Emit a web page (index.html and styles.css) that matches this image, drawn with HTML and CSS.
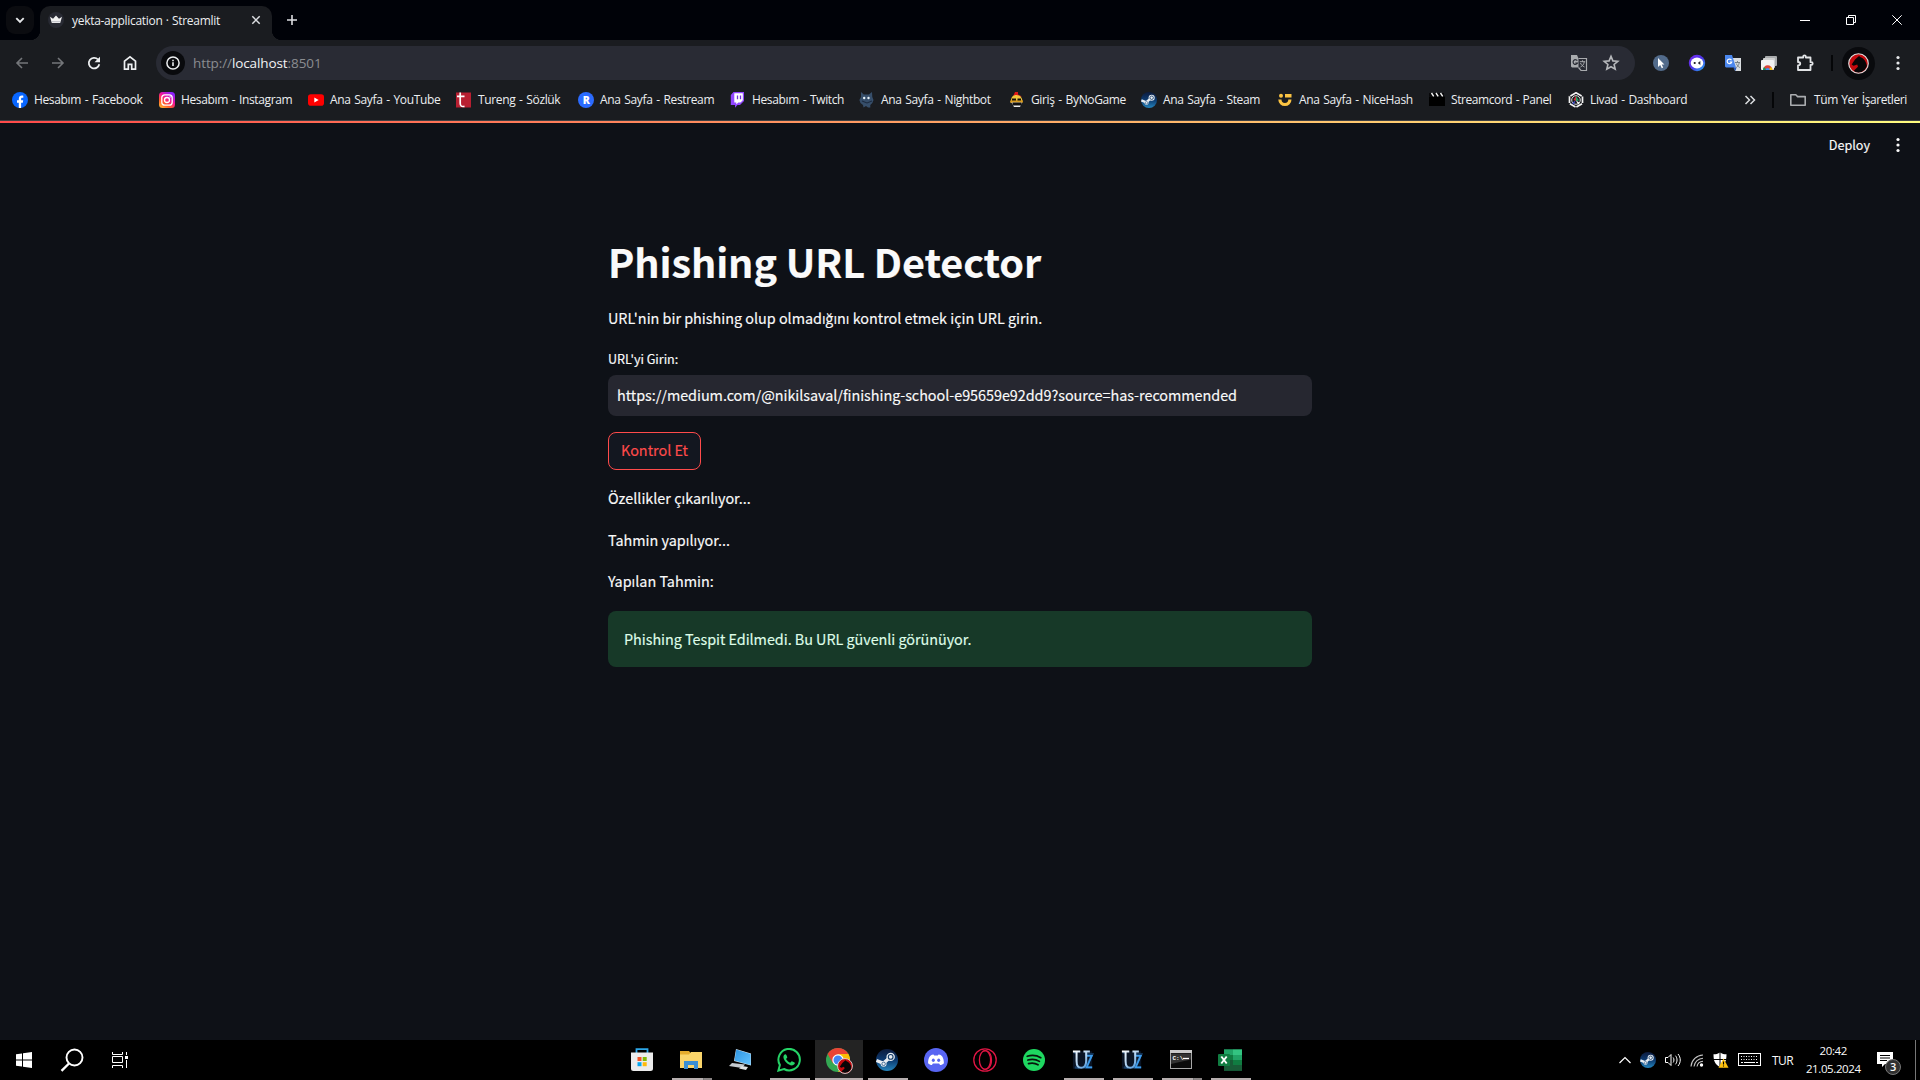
FILE: index.html
```html
<!DOCTYPE html>
<html lang="tr">
<head>
<meta charset="utf-8">
<title>yekta-application · Streamlit</title>
<link rel="stylesheet" href="styles.css">
</head>
<body>
<svg class="defs" width="0" height="0" aria-hidden="true">
  <defs>
    <linearGradient id="steamFill" x1="0" y1="0" x2="0" y2="1"><stop offset="0" stop-color="#0d1b3c"/><stop offset=".5" stop-color="#0c3a70"/><stop offset="1" stop-color="#2585bd"/></linearGradient>
    <linearGradient id="instaFill" x1="0" y1="1" x2=".7" y2="0"><stop offset="0" stop-color="#ffc933"/><stop offset=".35" stop-color="#ff5b2a"/><stop offset=".65" stop-color="#f0139a"/><stop offset="1" stop-color="#8a20ff"/></linearGradient>
    <linearGradient id="ringFill" x1="0" y1="0" x2="1" y2="1"><stop offset="0" stop-color="#7a28f0"/><stop offset=".5" stop-color="#4d35e8"/><stop offset="1" stop-color="#20b8f0"/></linearGradient>
    <linearGradient id="screenFill" x1="0" y1="0" x2="1" y2="1"><stop offset="0" stop-color="#2d93e0"/><stop offset="1" stop-color="#63c4ff"/></linearGradient>
    <linearGradient id="uFill" x1="0" y1="0" x2="1" y2="1"><stop offset="0" stop-color="#ffffff"/><stop offset=".55" stop-color="#a9cdee"/><stop offset="1" stop-color="#2f86d6"/></linearGradient>
    <symbol id="steam" viewBox="0 0 24 24"><circle cx="12" cy="12" r="12" fill="url(#steamFill)"/><path d="M.5 12.500 8 15.600 12 12l4-4" stroke="#e8edf2" stroke-width="3.600" fill="none"/><circle cx="8.300" cy="16.200" r="3.200" fill="#e8edf2"/><circle cx="8.300" cy="16.200" r="1.900" fill="none" stroke="#174a7c" stroke-width=".8"/><circle cx="16" cy="8.600" r="4.600" fill="#e8edf2"/><circle cx="16" cy="8.600" r="2.600" fill="none" stroke="#123a66" stroke-width="1.200"/></symbol>
    <symbol id="avatar" viewBox="0 0 20 20"><circle cx="10" cy="10" r="9.300" fill="#c40a0e"/><path d="M10.500 2.800 12 4c3.500 1.200 5.300 4.500 6 8-1 4-4 6.500-8 6.800-2-.2-3.500-.8-4.500-1.800L9.500 13 8.800 11l-3.500 1.200L3.500 11l3.200-4.800z" fill="#080506"/><circle cx="10" cy="10" r="9.300" fill="none" stroke="#e0dcdc" stroke-width="1.100"/></symbol>
    <symbol id="kebab" viewBox="0 0 6 16"><circle cx="3" cy="2.500" r="1.600"/><circle cx="3" cy="8" r="1.600"/><circle cx="3" cy="13.500" r="1.600"/></symbol>
    <symbol id="uz" viewBox="0 0 24 22"><rect x="1" y="1.500" width="21" height="19" fill="#0a1424"/><path d="M14 5h8l-7 14h7M3 19l5 1M2 3l3 0" stroke="#173d66" stroke-width="2.500" fill="none"/><path d="M15.500 6.500h6l-5.500 12.500h6" stroke="#3d9bea" stroke-width="2" fill="none"/><path d="M1 1.700h8M12.500 1.700h7M5 2v10c0 6 2 7.500 5 7.500 4 0 5.500-3 5.500-8V2" stroke="url(#uFill)" stroke-width="2.200" fill="none"/></symbol>
  </defs>
</svg>

<header class="tabstrip">
  <div class="tab-search"><svg width="12" height="12" viewBox="0 0 12 12"><path d="M2.300 4.200 6 7.900l3.700-3.700" fill="none" stroke="#e6e8ea" stroke-width="1.900"/></svg></div>
  <div class="tab">
    <svg width="16" height="16" viewBox="0 0 16 16"><circle cx="8" cy="8" r="8" fill="#282a33"/><path d="m2 4.700 3 2L8 3.600l3 3.100 3-2-1.800 6.200H3.800z" fill="#f1f1f1"/><path d="M4 9.700h8" stroke="#b9bbc2" stroke-width="1"/></svg>
    <span class="tab-title">yekta-application · Streamlit</span>
    <svg class="tab-close" width="10" height="10" viewBox="0 0 10 10"><path d="m1.300 1.300 7.400 7.400m0-7.400L1.300 8.700" stroke="#dcdee1" stroke-width="1.500"/></svg>
  </div>
  <svg class="new-tab" width="12" height="12" viewBox="0 0 12 12"><path d="M6 1v10M1 6h10" stroke="#dcdee1" stroke-width="1.600"/></svg>
  <div class="window-controls">
    <svg width="10" height="10" viewBox="0 0 10 10"><path d="M0 5.500h10" stroke="#fff"/></svg>
    <svg width="10" height="10" viewBox="0 0 10 10"><path d="M.5 2.500h7v7h-7zM2.500 2.500v-2h7v7h-2" fill="none" stroke="#fff"/></svg>
    <svg width="10" height="10" viewBox="0 0 10 10"><path d="m.3.3 9.400 9.400m0-9.400L.3 9.700" stroke="#fff"/></svg>
  </div>
</header>

<div class="toolbar">
  <div class="nav-buttons">
    <svg width="16" height="16" viewBox="0 0 16 16"><path d="M14 8H3m5-5L3 8l5 5" fill="none" stroke="#74767a" stroke-width="1.600"/></svg>
    <svg width="16" height="16" viewBox="0 0 16 16"><path d="M2 8h11M8 3l5 5-5 5" fill="none" stroke="#74767a" stroke-width="1.600"/></svg>
    <svg width="16" height="16" viewBox="0 0 16 16"><path d="M13.300 9.300A5.300 5.300 0 1 1 12 4.500" fill="none" stroke="#eceef0" stroke-width="1.800"/><path d="M14 1.700v5.600H8.500z" fill="#eceef0"/></svg>
    <svg width="16" height="16" viewBox="0 0 16 16"><path d="M2.500 14.200V6.200L8 1.900l5.500 4.300v8H9.700V9.300H6.300v4.900z" fill="none" stroke="#eceef0" stroke-width="1.700"/></svg>
  </div>
  <div class="omnibox">
    <span class="site-info"><svg width="14" height="14" viewBox="0 0 14 14"><circle cx="7" cy="7" r="6.100" fill="none" stroke="#eceef0" stroke-width="1.500"/><path d="M7 6.200V10M7 3.700v1.500" stroke="#eceef0" stroke-width="1.600"/></svg></span>
    <span class="url">http://<b>localhost</b>:8501</span>
    <svg class="page-translate" width="18" height="18" viewBox="0 0 18 18"><path d="M1 1h6l1.500 3.500 3.500 9H2L1 12.500z" fill="#a9abae"/><path d="M8.500 4.500H16.500V16.500H11L8.500 13.500" fill="#292b34" stroke="#a9abae" stroke-width="1.200"/><path d="M7.300 6.700A2.300 2.300 0 1 0 7.500 9H5.300" fill="none" stroke="#292b34" stroke-width="1.200"/><path d="M9.800 7.700h5.400M12.500 6.300v1.400m1.800 0c-.4 2.800-2 4.300-3.800 5.300m0-4c.8 2 2 3 4 4" fill="none" stroke="#a9abae"/></svg>
    <svg width="18" height="18" viewBox="0 0 18 18"><path d="m9 2.400 1.900 4.500 4.900.4-3.700 3.200 1.100 4.700L9 12.700l-4.200 2.500 1.100-4.700-3.700-3.200 4.900-.4z" fill="none" stroke="#b6b8bb" stroke-width="1.600"/></svg>
  </div>
  <div class="extensions">
    <svg width="18" height="18" viewBox="0 0 18 18"><circle cx="9" cy="9" r="8" fill="#526b8b"/><path d="M6 4v9l2.200-2 1.600 3.200 1.400-.7-1.500-3h2.700z" fill="#fff"/></svg>
    <svg width="18" height="18" viewBox="0 0 18 18"><circle cx="9" cy="9" r="8.200" fill="url(#ringFill)"/><ellipse cx="9" cy="9" rx="6.300" ry="5.400" fill="#fff"/><circle cx="6.700" cy="9" r="1.100" fill="#16131f"/><path d="m12.300 7.500-2 1.500 2 1.500" fill="#16131f" stroke="#16131f" stroke-width=".7"/></svg>
    <svg width="18" height="18" viewBox="0 0 18 18"><path d="M8 4h9v13h-6z" fill="#d9dde0"/><path d="M1 1h7l4 12.500H2L1 12.500z" fill="#4b87ee"/><path d="m9 13.500 2.500 3.500 1-3.500z" fill="#2659bd"/><path d="M7.500 6.200A2.300 2.300 0 1 0 7.700 8H5.700" fill="none" stroke="#fff" stroke-width="1.200"/><path d="M11 8.500h5M13.500 7v1.500m1.800 0c-.5 2.700-1.600 4-3 5m0-4c.8 1.800 1.600 3 3.500 4" fill="none" stroke="#768188"/></svg>
    <svg width="18" height="18" viewBox="0 0 18 18"><rect x="5" y="2" width="12" height="10" rx="1" fill="#a9abad"/><rect x="3" y="4" width="12" height="10" rx="1" fill="#cfd0d1"/><rect x="1" y="6" width="13" height="10" rx="1" fill="#f2f2f2"/><path d="M3 16a4.700 4.700 0 0 1 9.400 0z" fill="#db4437"/><path d="M3 16a4.700 4.700 0 0 1 1-3l2.500 3z" fill="#0f9d58"/><path d="M9 16l1-2.500h1.800a4.700 4.700 0 0 1 .6 2.500z" fill="#f4c20d"/><path d="M5.600 16a2.100 2.100 0 0 1 4.200 0z" fill="#4285f4"/></svg>
    <svg width="18" height="18" viewBox="0 0 18 18"><path d="M2 3.500h5.200V2.600a1.300 1.300 0 0 1 2.600 0v.9H14.500v4.700h.9a1.300 1.300 0 0 1 0 2.600h-.9v5.200H2v-4.500c3-.3 3-3.200 0-3.500z" fill="none" stroke="#e2e4e6" stroke-width="1.800" stroke-linejoin="round"/></svg>
  </div>
  <span class="divider"></span>
  <span class="profile"><svg width="21" height="21"><use href="#avatar"/></svg></span>
  <svg class="menu-dots" width="6" height="16"><use href="#kebab"/></svg>
</div>

<nav class="bookmarks">
  <div class="bookmark-list">
    <a class="bookmark"><svg viewBox="0 0 16 16"><circle cx="8" cy="8" r="8" fill="#0866ff"/><path d="M6.800 16v-5.300H5V8.300h1.800V7c0-2.300 1.200-3.400 3.100-3.400.6 0 1.100 0 1.400.1v2.100h-1c-.9 0-1.200.4-1.200 1.200v1.300h2.100l-.4 2.400H9.100V16z" fill="#fff"/></svg><span>Hesabım - Facebook</span></a>
    <a class="bookmark"><svg viewBox="0 0 16 16"><rect width="16" height="16" rx="3.500" fill="url(#instaFill)"/><rect x="2.800" y="2.800" width="10.400" height="10.400" rx="3" fill="none" stroke="#fff" stroke-width="1.300"/><circle cx="8" cy="8" r="2.500" fill="none" stroke="#fff" stroke-width="1.300"/><circle cx="11.100" cy="4.900" r=".7" fill="#fff"/></svg><span>Hesabım - Instagram</span></a>
    <a class="bookmark"><svg viewBox="0 0 16 16"><rect y="2.300" width="16" height="11.400" rx="2.800" fill="#f00"/><path d="m6.300 5.500 4.400 2.500-4.400 2.500z" fill="#fff"/></svg><span>Ana Sayfa - YouTube</span></a>
    <a class="bookmark"><svg viewBox="0 0 16 16"><rect y=".5" width="15" height="15" fill="#b81f31"/><path d="M1 4.300h7.500M4.200.5v10.800c0 3 1.500 3.600 4.300 3" fill="none" stroke="#fff" stroke-width="1.700"/></svg><span>Tureng - Sözlük</span></a>
    <a class="bookmark"><svg viewBox="0 0 16 16"><circle cx="8" cy="8" r="8" fill="#2b6bff"/><text x="8.200" y="11.800" text-anchor="middle" class="r-mark">R</text></svg><span>Ana Sayfa - Restream</span></a>
    <a class="bookmark"><svg viewBox="0 0 16 16"><path d="M3.500 0H14v9l-4 4H7.500L5 15.800V13H.8V3z" fill="#9146ff"/><path d="M4.300 1.200h8.500v7L10.500 10.500H8.300l-2 2v-2h-2z" fill="#fff"/><path d="M7.500 3.500v3.700M10.500 3.500v3.700" stroke="#7132d6" stroke-width="1.300"/></svg><span>Hesabım - Twitch</span></a>
    <a class="bookmark"><svg viewBox="0 0 16 16"><path d="m2 0 2.800 2.500h5L13 0l.3 5 1.200 3-1.200 3-2 2v2.500H9L7 14l-2.500 1.500L4 13 1.500 11 .4 8 2 5z" fill="#364e6a"/><circle cx="5.200" cy="6" r="1.200" fill="#e8f2f8"/><circle cx="9.500" cy="6" r="1.200" fill="#e8f2f8"/><path d="m3 9 5 2 5-2" fill="none" stroke="#1c2b40" stroke-width="1.100"/></svg><span>Ana Sayfa - Nightbot</span></a>
    <a class="bookmark"><svg viewBox="0 0 16 16"><path d="M6 0h3v2.500l4 2H4z" fill="#e01818"/><path d="M2 9c0-4 2-6 5.500-6S13 5 13.500 9z" fill="#f0c63c"/><rect x="1" y="8" width="13" height="3" rx="1.500" fill="#d89c20"/><path d="M3 7.500h4m1.500 0H12" stroke="#15100a" stroke-width="1.800"/><path d="M2.500 10.500h10.500L11 15H5z" fill="#eee"/><path d="M3.500 10.500h9v3h-9z" fill="#111"/></svg><span>Giriş - ByNoGame</span></a>
    <a class="bookmark"><svg><use href="#steam"/></svg><span>Ana Sayfa - Steam</span></a>
    <a class="bookmark"><svg viewBox="0 0 16 16"><circle cx="4" cy="3.800" r="2" fill="#fbc342"/><rect x="8" y="2" width="6.500" height="3.500" fill="#fbc342"/><path d="M1.300 7.500h3.200a3.400 3.400 0 0 0 6.800 0h3.200a6.600 6.600 0 0 1-13.200 0z" fill="#fbc342"/></svg><span>Ana Sayfa - NiceHash</span></a>
    <a class="bookmark tight"><svg viewBox="0 0 16 16"><path d="M0 4.500h16V14H0z" fill="#000"/><path d="M0 1h15v3.500H0z" fill="#08080a"/><path d="m2.500 1 2.200 3.300M7 1l2.200 3.300M11.500 1l2.200 3.300" stroke="#f5f5f5" stroke-width="1.400"/></svg><span>Streamcord - Panel</span></a>
    <a class="bookmark"><svg viewBox="0 0 16 16"><path d="m8 .8 6.500 3.700v7L8 15.200l-6.500-3.700v-7z" fill="#16181c" stroke="#f3f3f3" stroke-width="1.700" stroke-dasharray="6.500 1"/><circle cx="8" cy="8" r="4.300" fill="none" stroke="#ddd"/><path d="M8 3.500 5.500 8 8 9z" fill="#d12d38"/><path d="m8 4 3 4.500L8 9z" fill="#20a567"/><path d="M8 8.500 12 11l-2 1.500z" fill="#fff"/><path d="M7.500 8.500 4 11l2 1.500z" fill="#4450c8"/></svg><span>Livad - Dashboard</span></a>
  </div>
  <svg class="more" width="12" height="12" viewBox="0 0 12 12"><path d="m1.500 2 4 4-4 4m5-8 4 4-4 4" fill="none" stroke="#dcdee1" stroke-width="1.500"/></svg>
  <span class="divider"></span>
  <a class="bookmark tight all-bookmarks"><svg viewBox="0 0 16 16"><path d="M.8 13.200V2.800h5l1.800 1.800h7.600v8.600z" fill="none" stroke="#aaacaf" stroke-width="1.600" stroke-linejoin="round"/></svg><span>Tüm Yer İşaretleri</span></a>
</nav>

<main class="app">
  <div class="decoration"></div>
  <div class="app-header">
    <span class="deploy">Deploy</span>
    <svg width="6" height="16"><use href="#kebab"/></svg>
  </div>
  <section class="block">
    <h1>Phishing URL Detector</h1>
    <p class="intro">URL'nin bir phishing olup olmadığını kontrol etmek için URL girin.</p>
    <div class="field">
      <label>URL'yi Girin:</label>
      <div class="text-input">https://medium.com/@nikilsaval/finishing-school-e95659e92dd9?source=has-recommended</div>
    </div>
    <button class="check">Kontrol Et</button>
    <p>Özellikler çıkarılıyor...</p>
    <p>Tahmin yapılıyor...</p>
    <p>Yapılan Tahmin:</p>
    <div class="alert">Phishing Tespit Edilmedi. Bu URL güvenli görünüyor.</div>
  </section>
</main>

<footer class="taskbar">
  <div class="start">
    <svg width="16" height="16" viewBox="0 0 16 16"><path d="M0 2.200 6 1.400v6.100H0zM7 1.200l9-1.200v7.500H7zM0 8.500h6v6.100l-6-.8zM7 8.500h9V16l-9-1.200z" fill="#fff"/></svg>
    <svg width="24" height="24" viewBox="0 0 24 24"><circle cx="14.500" cy="9.500" r="8" fill="none" stroke="#fff" stroke-width="1.900"/><path d="m9 15.500-7.500 7.300" stroke="#fff" stroke-width="2.400"/></svg>
    <svg width="16" height="16" viewBox="0 0 16 16"><path d="M.5 0v2.500h10V0M.5 16v-2.500h10V16M.5 4.500h10v6H.500zM14.500 0v16" fill="none" stroke="#fff"/><rect x="12.500" y="3.500" width="4" height="4" fill="#fff" stroke="#000"/></svg>
  </div>

  <div class="apps">
    <span class="app-button"><svg viewBox="0 0 24 24"><path d="M6.500 5V1.200h11V5" fill="none" stroke="#2da7e8" stroke-width="1.800"/><path d="M1 4.500h22v16A2.500 2.500 0 0 1 20.500 23h-17A2.500 2.500 0 0 1 1 20.500z" fill="#ececec"/><path d="M7.500 9h4v4h-4z" fill="#f35325"/><path d="M12.700 9h4v4h-4z" fill="#81bc06"/><path d="M7.500 14.200h4v4h-4z" fill="#05a6f0"/><path d="M12.700 14.200h4v4h-4z" fill="#ffba08"/></svg></span>
    <span class="app-button running stacked"><svg viewBox="0 0 24 24"><path d="M1 3h9l1.500 2H23v15H1z" fill="#e6ac2d"/><path d="M1 6.500h9l2-2.500h11v16H1z" fill="#fbd56b"/><path d="M5 21v-8h14v8h-4v-4H9v4z" fill="#3b8fd4"/></svg></span>
    <span class="app-button"><svg viewBox="0 0 24 24"><path d="m8 1 15 4.500v12L6 13z" fill="#d8e3eb"/><path d="m8.300 1.500 14.400 4.500v11L6.500 12.600z" fill="url(#screenFill)"/><path d="m4 15 13 1.500-3 3.500-13-2z" fill="#c5cbd0"/><path d="m14 18 6 1-2 3-7-1.500z" fill="#dfe3e5"/></svg></span>
    <span class="app-button running"><svg viewBox="0 0 24 24"><path d="M1.400 22.600 2.900 17A10.700 10.700 0 1 1 7 21z" fill="none" stroke="#25d366" stroke-width="2"/><path d="M8.400 6.300c-.9 0-2 1.200-2 2.700 0 3.500 4.800 8.400 8.600 8.400 1.600 0 2.900-1.100 2.900-2.300 0-.6-2.600-1.900-3.100-1.900-.6 0-1.100 1.400-1.600 1.400-1 0-4-2.700-4-3.700 0-.5 1.100-1 1.100-1.700 0-.4-1-2.700-1.300-2.800z" fill="#25d366"/></svg></span>
    <span class="app-button running active"><svg viewBox="0 0 24 24"><circle cx="12" cy="12" r="12" fill="#34a853"/><path d="M1.600 6A12 12 0 0 1 22.400 6L12 12 6.800 15z" fill="#ea4335"/><path d="M12 6h10.400A12 12 0 0 1 12 24l5.200-9z" fill="#fbbc05"/><circle cx="12" cy="12" r="5.700" fill="#fff"/><circle cx="12" cy="12" r="4.500" fill="#4285f4"/></svg><svg class="profile-badge" width="15" height="15"><use href="#avatar"/></svg></span>
    <span class="app-button running"><svg class="app-22"><use href="#steam"/></svg></span>
    <span class="app-button"><svg viewBox="0 0 24 24"><circle cx="12" cy="12" r="12" fill="#5865f2"/><path d="M8 6.700 9.500 6.500l.7 1h3.600l.7-1 1.500.2c2.700 1 4 4.500 3.900 8.500-1 1-2.500 1.700-3.800 1.900l-1-1.700H8.900l-1 1.700c-1.300-.2-2.800-.9-3.800-1.900C4 11.200 5.300 7.700 8 6.700z" fill="#fff"/><ellipse cx="9.300" cy="12.200" rx="1.500" ry="1.700" fill="#5865f2"/><ellipse cx="14.700" cy="12.200" rx="1.500" ry="1.700" fill="#5865f2"/></svg></span>
    <span class="app-button"><svg viewBox="0 0 24 24"><circle cx="12" cy="12" r="11.200" fill="none" stroke="#e01544" stroke-width="1.300"/><ellipse cx="12" cy="12" rx="5.600" ry="9.300" fill="none" stroke="#e01544" stroke-width="1.300"/><path d="M10 3.200C14 1 18.500 5 18.500 12S14 23 10 20.800" fill="none" stroke="#e01544" stroke-width="1.200"/></svg></span>
    <span class="app-button"><svg class="app-22" viewBox="0 0 24 24"><circle cx="12" cy="12" r="12" fill="#1ed760"/><path d="M4.600 7.900c5-1.400 10.400-1 14.800 1.600M5.300 12c4.300-1.200 8.900-.8 12.600 1.500M6 15.900c3.700-1 7.300-.6 10.400 1.300" fill="none" stroke="#07150c" stroke-width="1.900" stroke-linecap="round"/></svg></span>
    <span class="app-button running"><svg class="app-22"><use href="#uz"/></svg></span>
    <span class="app-button running"><svg class="app-22"><use href="#uz"/></svg></span>
    <span class="app-button running stacked"><svg viewBox="0 0 24 24"><rect x="1.500" y="2.500" width="21" height="18" fill="#0b0b0b" stroke="#a7a7a7"/><path d="M1 2h22v3H1z" fill="#c9c9c9"/><path d="M2 5.500h20v6L2 16z" fill="#333"/><text x="3.500" y="12" class="prompt">C:\</text><path d="M14 10.500h6" stroke="#fff" stroke-width="1.300"/></svg></span>
    <span class="app-button running"><svg viewBox="0 0 24 24"><path d="M6 1.500h18v21H6z" fill="#21a366"/><path d="M6 12h9v10.500H6z" fill="#185c37"/><path d="M15 1.500h9V7h-9z" fill="#33c481"/><path d="M6 1.500h9V7H6z" fill="#21a366"/><path d="M6 7h9v5H6zM15 12h9v5h-9z" fill="#107c41"/><path d="M15 17h9v5.500h-9z" fill="#185c37"/><rect y="6" width="12" height="12" rx="1" fill="#107c41"/><path d="m3.300 8.500 5.400 7m0-7-5.400 7" stroke="#fff" stroke-width="1.900"/></svg></span>
  </div>

  <div class="tray">
    <svg width="12" height="8" viewBox="0 0 12 8"><path d="m.5 7 5.500-5.500L11.500 7" fill="none" stroke="#fff" stroke-width="1.200"/></svg>
    <svg width="16" height="16"><use href="#steam"/></svg>
    <svg width="16" height="16" viewBox="0 0 16 16"><path d="M.5 5.500H3l3-3v11l-3-3H.500z" fill="none" stroke="#fff"/><path d="M8.200 5.500c1 1.500 1 3.500 0 5M10.500 3.700c2 2.500 2 6 0 8.600M13 2c3 3.600 3 8.400 0 12" fill="none" stroke="#fff"/></svg>
    <svg width="14" height="14" viewBox="0 0 14 14"><path d="M1 13.500A12.500 12.500 0 0 1 13 2M4 13.500A9.500 9.500 0 0 1 13 5.200M7 13.500a6.500 6.500 0 0 1 6-5.200" fill="none" stroke="#c5c5c5" stroke-width="1.100"/><circle cx="11.500" cy="12" r="1.700" fill="#fff"/></svg>
    <svg width="16" height="16" viewBox="0 0 16 16"><path d="M7 .5C5 1.800 3 2.300.5 2.300c0 6.200 1.300 10.400 6.500 12.700 5.200-2.300 6.500-6.500 6.500-12.700C11 2.300 9 1.800 7 .5z" fill="#fff"/><path d="M7 0v15M0 7.500h14" stroke="#000"/><path d="m10.500 6.500 5 9.200h-10z" fill="#ffc20e"/><path d="M10.500 9.500v3M10.500 13.500v1" stroke="#000" stroke-width="1.100"/></svg>
    <svg width="23" height="14" viewBox="0 0 23 14"><rect x=".5" y=".5" width="22" height="12" fill="none" stroke="#fff"/><path d="M3 3.500h17M3 6.500h17" stroke="#fff" stroke-dasharray="1 1.500"/><path d="M3 9.500h2m1 0h11m1 0h2" stroke="#fff"/></svg>
    <span class="language">TUR</span>
    <span class="clock"><span>20:42</span><span>21.05.2024</span></span>
    <span class="notifications"><svg width="16" height="16" viewBox="0 0 16 16"><path d="M0 0h16v12H8l-3 3v-3H0z" fill="#fff"/><path d="M3 3.500h10M3 6h10M3 8.500h7" stroke="#000"/></svg><span class="count">3</span></span>
    <span class="show-desktop"></span>
  </div>
</footer>
</body>
</html>
```
FILE: styles.css
```css
* { box-sizing: border-box; }

body {
  margin: 0;
  width: 1920px;
  height: 1080px;
  overflow: hidden;
  display: flex;
  flex-direction: column;
  background: #0e1117;
  color: #fafafa;
  font-family: "Open Sans", "Noto Sans", sans-serif;
}

svg { display: block; flex: none; }
.defs { position: absolute; }

/* Tab strip */
.tabstrip {
  height: 40px;
  flex: none;
  display: flex;
  align-items: center;
  background: #000208;
  padding-left: 6px;
}
.tab-search {
  width: 28px;
  height: 28px;
  border-radius: 9px;
  background: #0b0c10;
  display: grid;
  place-items: center;
}
.tab {
  position: relative;
  align-self: flex-end;
  width: 232px;
  height: 34px;
  margin-left: 6px;
  padding: 0 11px 6px 8px;
  border-radius: 10px 10px 0 0;
  background: #1a1c20;
  display: flex;
  align-items: center;
}
.tab::before,
.tab::after {
  content: "";
  position: absolute;
  bottom: 0;
  width: 10px;
  height: 10px;
}
.tab::before { left: -10px; background: radial-gradient(circle at 0 0, transparent 10px, #1a1c20 10.500px); }
.tab::after { right: -10px; background: radial-gradient(circle at 100% 0, transparent 10px, #1a1c20 10.500px); }
.tab-title {
  margin-left: 8px;
  flex: 1;
  font-size: 12px;
  letter-spacing: -0.3px;
  word-spacing: 0.5px;
  white-space: nowrap;
  color: #eceef0;
}
.new-tab { margin-left: 14px; }
.window-controls {
  margin-left: auto;
  margin-right: 18px;
  display: flex;
  gap: 36px;
}

/* Toolbar */
.toolbar {
  height: 46px;
  flex: none;
  display: flex;
  align-items: center;
  background: #1a1c20;
  padding: 0 19px 0 14px;
}
.nav-buttons { display: flex; gap: 20px; }
.omnibox {
  width: 1479px;
  height: 34px;
  margin-left: 18px;
  padding: 0 15px 0 5px;
  border-radius: 17px;
  background: #292b34;
  display: flex;
  align-items: center;
}
.site-info {
  width: 24px;
  height: 24px;
  border-radius: 50%;
  background: #090a0d;
  display: grid;
  place-items: center;
}
.url {
  margin-left: 8px;
  flex: 1;
  font-size: 13.500px;
  letter-spacing: -0.1px;
  color: #8b8d91;
}
.url b { font-weight: 400; color: #f1f3f5; }
.page-translate { margin-right: 14px; }
.extensions { margin-left: 17px; display: flex; gap: 18px; }
.divider { width: 2px; height: 16px; background: #050608; }
.toolbar .divider { margin-left: 17px; }
.profile {
  width: 33px;
  height: 33px;
  margin-left: 9px;
  border-radius: 50%;
  background: #090a0d;
  display: grid;
  place-items: center;
}
.menu-dots { margin-left: auto; fill: #e6e8ea; }

/* Bookmarks bar */
.bookmarks {
  height: 35px;
  flex: none;
  display: flex;
  align-items: center;
  background: #1a1c20;
  border-bottom: 1px solid #3d4044;
  padding: 0 0 6px 12px;
}
.bookmark-list {
  display: grid;
  grid-template-columns: 147px 149px 148px 122px 152px 129px 150px 132px 136px 152px 139px 164px;
}
.bookmark { display: flex; align-items: center; gap: 6px; }
.bookmark svg { width: 16px; height: 16px; }
.bookmark span {
  font-size: 12px;
  line-height: 16px;
  letter-spacing: -0.36px;
  word-spacing: 1px;
  white-space: nowrap;
  color: #eceef0;
}
.bookmark.tight span { letter-spacing: -0.42px; word-spacing: 0.7px; }
.r-mark { font: 800 10.500px "Open Sans", sans-serif; fill: #fff; }
.more { margin-left: 12px; }
.bookmarks .divider { margin-left: 16px; }
.all-bookmarks { margin-left: 16px; gap: 8px; }

/* Application page */
.app {
  flex: 1;
  display: flex;
  flex-direction: column;
  font-family: "Noto Sans CJK JP", "Open Sans", sans-serif;
  -webkit-text-stroke: 0.15px;
}
.decoration { height: 2px; background: linear-gradient(90deg, #ff4b4b, #fffd80); }
.app-header {
  height: 44px;
  display: flex;
  justify-content: flex-end;
  align-items: center;
  gap: 25px;
  padding-right: 19px;
  fill: #fafafa;
}
.deploy { font-size: 12.600px; line-height: 20px; }
.block { width: 704px; margin: 67px auto 0; }
h1 {
  margin: 0;
  font-size: 39.600px;
  line-height: 53px;
  font-weight: 700;
  letter-spacing: -0.1px;
}
p { margin: 0 0 17.500px; font-size: 14.400px; line-height: 24px; }
.intro { margin: 19px 0; letter-spacing: -0.01px; }
.field { margin-bottom: 16px; }
label { display: block; font-size: 12.600px; line-height: 20px; margin-bottom: 6px; letter-spacing: -0.04px; }
.text-input {
  height: 41px;
  padding-left: 9px;
  border-radius: 8px;
  background: #262730;
  font-size: 14.400px;
  line-height: 40px;
  letter-spacing: -0.04px;
}
.check {
  display: block;
  width: 93px;
  height: 38px;
  margin-bottom: 16px;
  padding: 0 0 2px;
  border: 1px solid #ff4b4b;
  border-radius: 8px;
  background: #131720;
  color: #ff4b4b;
  font: 400 14.400px/34px "Noto Sans CJK JP", sans-serif;
}
.alert {
  height: 56px;
  padding: 0 16px;
  border-radius: 8px;
  background: #173928;
  color: #dffde9;
  font-size: 14.400px;
  line-height: 56px;
  letter-spacing: -0.04px;
}

/* Taskbar */
.taskbar {
  height: 40px;
  flex: none;
  display: grid;
  grid-template-columns: 617.500px 637.500px 1fr;
  background: #000;
}
.start { display: flex; align-items: center; padding-left: 16px; gap: 28px; }
.apps { display: flex; }
.app-button {
  position: relative;
  width: 49px;
  display: grid;
  place-items: center;
}
.app-button svg { width: 24px; height: 24px; }
.app-button .app-22 { width: 22px; height: 22px; }
.running::after {
  content: "";
  position: absolute;
  left: 5px;
  bottom: 0;
  width: 40px;
  height: 2px;
  background: #b6aeae;
}
.stacked::after { background: linear-gradient(90deg, #b6aeae 31px, #777 31px, #777 32px, #8b8585 32px); }
.active { background: linear-gradient(90deg, transparent 1px, #232323 1px); }
.active::after { left: 1px; width: 48px; }
.app-button .profile-badge {
  position: absolute;
  left: 23px;
  top: 18px;
  width: 16px;
  height: 16px;
}
.prompt { font: 700 6px "Liberation Mono", monospace; fill: #fff; }
.tray { display: flex; align-items: center; padding-left: 364px; }
.tray > svg { margin-right: 9px; }
.language { margin-left: 2px; font-size: 12px; letter-spacing: -0.5px; }
.clock {
  width: 56px;
  margin-left: 12px;
  display: flex;
  flex-direction: column;
  align-items: center;
  font-size: 11.500px;
  line-height: 18px;
  letter-spacing: -0.4px;
}
.notifications { position: relative; margin-left: 16px; }
.count {
  position: absolute;
  left: 8px;
  top: 7px;
  width: 16px;
  height: 16px;
  border: 1px solid #777;
  border-radius: 50%;
  background: #303030;
  font-size: 11px;
  font-weight: 600;
  line-height: 14px;
  text-align: center;
}
.show-desktop { height: 40px; margin-left: auto; margin-right: 4px; border-left: 1px solid #777; }
```
